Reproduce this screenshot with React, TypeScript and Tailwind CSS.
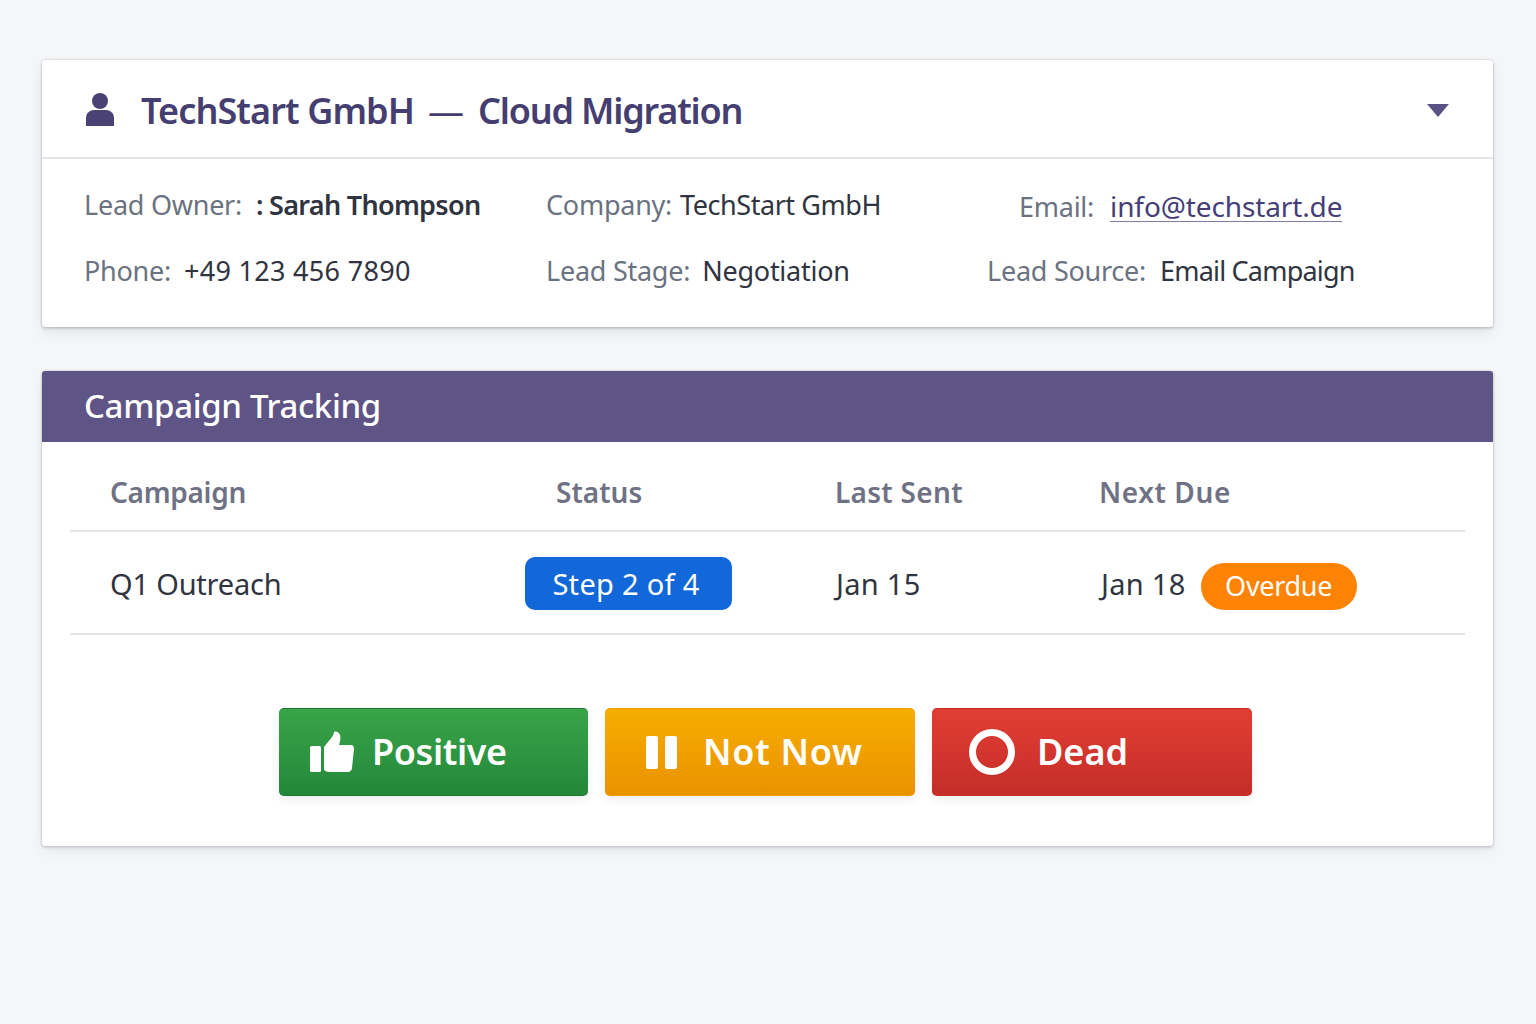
const font = "font-['Noto_Sans',sans-serif]";

function Field({ label, value, gap = 'ml-3.5', track = '' }: { label: string; value: React.ReactNode; gap?: string; track?: string }) {
  return (
    <div className="flex items-baseline whitespace-nowrap">
      <span className="text-[#6b7280]">{label}</span>
      <span className={`${gap} ${track} text-[#30343f]`}>{value}</span>
    </div>
  );
}

function ActionButton({ icon, label, className, textGap }: { icon: React.ReactNode; label: string; className: string; textGap: string }) {
  return (
    <button className={`flex h-[88px] items-center rounded-[5px] border-b border-t text-[36px] leading-none font-semibold text-white shadow-[0_4px_10px_rgba(0,0,0,0.07)] ${className}`}>
      {icon}
      <span className={textGap}>{label}</span>
    </button>
  );
}

export default function App() {
  return (
    <div className={`min-h-[1024px] bg-[#f4f6f8] pt-[60px] pr-[43px] pl-[42px] ${font}`}>
      <section className="h-[267px] rounded-[3px] bg-white shadow-[0_0_2px_rgba(30,35,60,0.3),0_2px_3px_rgba(30,35,60,0.14),0_6px_14px_rgba(30,35,60,0.07)]">
        <header className="flex h-[99px] items-center border-b-2 border-[#e3e5e9] pr-[43px] pl-[44px]">
          <svg width="28" height="33" viewBox="0 0 28 33" className="mt-[2px] mr-[27px] fill-[#4a4274]">
            <circle cx="14" cy="8" r="8" />
            <path d="M0 33v-8c0-5 4-8 8-8h12c4 0 8 3 8 8v8z" />
          </svg>
          <h1 className="mt-[5px] text-[36px] leading-none font-semibold tracking-[-0.9px] text-[#453e70]">
            TechStart GmbH
            <span className="ml-[14px] mr-[13px] inline-block w-[37px] font-normal tracking-normal">—</span>
            <span className="tracking-[-1.2px]">Cloud Migration</span>
          </h1>
          <svg width="22" height="13" viewBox="0 0 22 13" className="mt-[4px] mr-[1px] ml-auto fill-[#5a5285]">
            <path d="M0 0h22L11 13z" />
          </svg>
        </header>
        <div className="grid grid-cols-[462px_441px_1fr] gap-y-[26px] pt-[27px] pl-[42px] text-[27px] leading-[38px] tracking-[-0.25px]">
          <Field label="Lead Owner:" value={<b className="font-semibold">: Sarah Thompson</b>} track="tracking-[-0.7px]" />
          <Field label="Company:" value="TechStart GmbH" gap="ml-[8px]" track="tracking-[-0.45px]" />
          <div className="flex items-baseline whitespace-nowrap pt-[2px] pl-[32px]">
            <span className="text-[#6b7280]">Email:</span>
            <a className="ml-[16px] border-b border-[#7d78a8] text-[28px] leading-[30px] tracking-[-0.12px] text-[#453e78]">info@techstart.de</a>
          </div>
          <Field label="Phone:" value="+49 123 456 7890" gap="ml-[13px]" track="tracking-[0.3px]" />
          <Field label="Lead Stage:" value="Negotiation" gap="ml-[12px]" />
          <Field label="Lead Source:" value="Email Campaign" track="tracking-[-0.8px]" />
        </div>
      </section>

      <section className="mt-[44px] h-[475px] overflow-hidden rounded-[3px] bg-white shadow-[0_0_2px_rgba(30,35,60,0.3),0_2px_3px_rgba(30,35,60,0.12),0_5px_12px_rgba(30,35,60,0.06)]">
        <h2 className="flex h-[71px] items-center bg-[#5e5485] pb-[2px] pl-[42px] text-[33px] font-medium tracking-[-0.35px] text-white">Campaign Tracking</h2>
        <div className="mx-[28px]">
          <div className="grid h-[90px] grid-cols-[445px_280px_265px_1fr] items-end border-b-2 border-[#e3e5e9] pb-[19px] pl-[41px] text-[28px] leading-[38px] font-semibold text-[#6f7285]">
            <span className="ml-[-1px] tracking-[-0.3px]">Campaign</span>
            <span>Status</span>
            <span className="ml-[-1px] tracking-[0.3px]">Last Sent</span>
            <span className="ml-[-2px] tracking-[0.6px]">Next Due</span>
          </div>
          <div className="grid h-[103px] grid-cols-[414px_311px_264px_1fr] items-center border-b-2 border-[#e3e5e9] pt-[2px] pl-[41px] text-[29px] tracking-[-0.2px] text-[#30343f]">
            <span className="ml-[-1px]">Q1 Outreach</span>
            <span className="flex h-[53px] w-[207px] items-center justify-center rounded-[10px] bg-[#1268d8] pr-[5px] tracking-[0.3px] text-white">Step 2 of 4</span>
            <span className="tracking-[0.3px]">Jan 15</span>
            <div className="flex items-center">
              <span className="ml-[1px] tracking-[0.3px]">Jan 18</span>
              <span className="mt-[5px] ml-[15px] flex h-[47px] w-[156px] items-center justify-center rounded-full bg-[#fd8305] text-[27px] tracking-[-0.3px] text-white">Overdue</span>
            </div>
          </div>
          <div className="mt-[73px] flex justify-center gap-[17px] pr-[4px]">
            <ActionButton
              className="w-[309px] border-[#1d7a34] bg-gradient-to-b from-[#38a549] to-[#24873a] tracking-[-0.4px]"
              icon={
                <svg width="44" height="42" viewBox="0 0 44 42" className="ml-[31px] fill-white">
                  <rect x="0" y="15" width="11" height="26" rx="1.5" />
                  <path d="M14 16 22 6c1-2 2-3 2-5 0-1 5-1 6 3 1 3 0 7-1 10h12c3 0 3 3 3 4l-2 19c0 2-2 4-4 4H20c-3 0-6-1-6-3z" />
                </svg>
              }
              label="Positive"
              textGap="ml-[18px]"
            />
            <ActionButton
              className="w-[310px] border-[#eba000] bg-gradient-to-b from-[#f6ad00] to-[#ea9200] tracking-[0.7px]"
              icon={
                <span className="ml-[41px] flex gap-[7px]">
                  <i className="h-[33px] w-[12px] rounded-[2px] bg-white" />
                  <i className="h-[33px] w-[12px] rounded-[2px] bg-white" />
                </span>
              }
              label="Not Now"
              textGap="ml-[26px]"
            />
            <ActionButton
              className="w-[320px] border-[#c42f2a] bg-gradient-to-b from-[#e23e33] to-[#c42d28]"
              icon={<span className="ml-[37px] h-[46px] w-[46px] rounded-full border-[7px] border-white" />}
              label="Dead"
              textGap="ml-[22px]"
            />
          </div>
        </div>
      </section>
    </div>
  );
}
